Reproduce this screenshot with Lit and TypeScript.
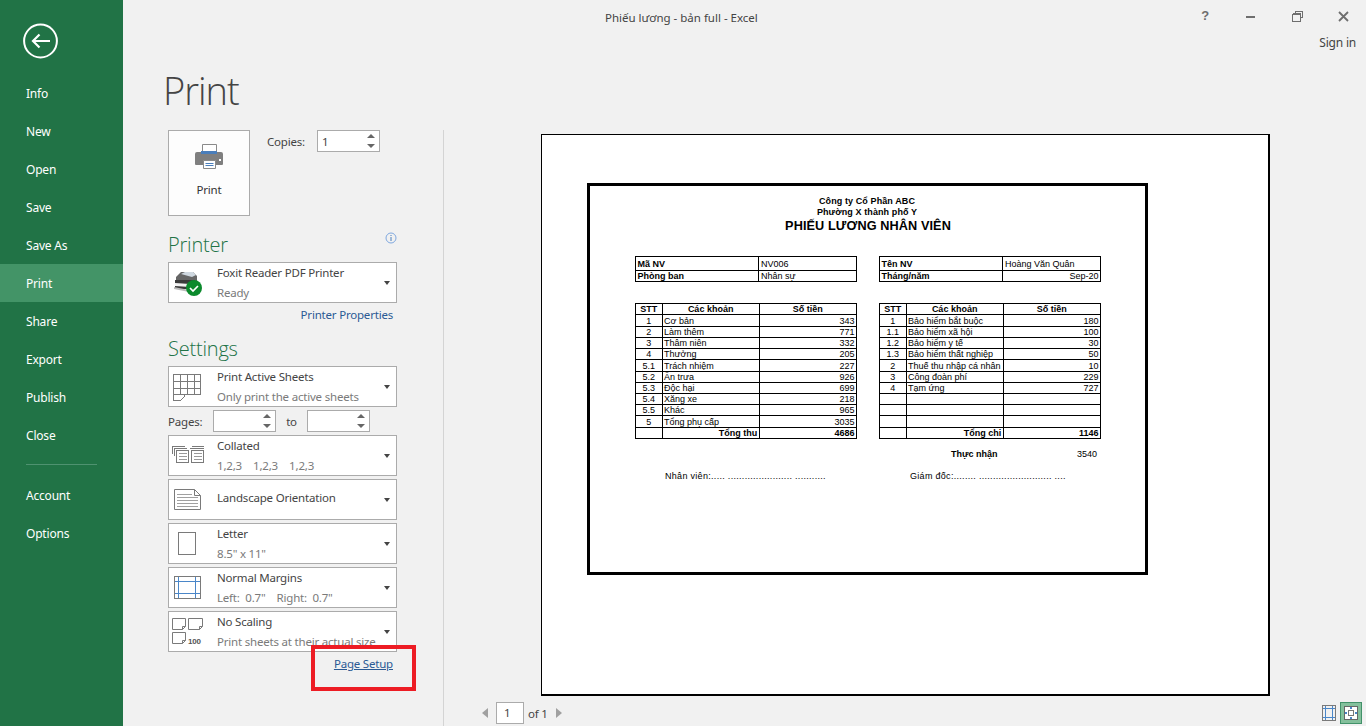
import { LitElement, html, css, svg } from "lit";
import { customElement } from "lit/decorators.js";

const G = "#7a7a7a";
const B = "#4a86c8";

const icons = {
  sheets: svg`<svg width="30" height="30" viewBox="0 0 30 30" fill="none" stroke="${G}" shape-rendering="crispEdges"><path d="M2.5 2.5h27v20h-27zM2.5 9.5h27M2.5 16.5h27M9.5 2.5v20M16.5 2.5v20M23.5 2.5v20"/><path d="M2.5 22.5v6h7l4-4v-2" fill="#fff"/></svg>`,
  collated: svg`<svg width="34" height="22" viewBox="0 0 34 22" fill="none" stroke="${G}" shape-rendering="crispEdges"><path d="M1.5 8.5v-7h12M3.5 10.5v-7h12M20.5 1.5h12M18.5 3.5h14" /><path d="M5.5 5.5h12v12h-12zM20.5 5.5h12v12h-12z" fill="#fff" stroke-width="1.4"/><path d="M7.5 8.5h8M7.5 11.5h8M7.5 14.5h8M22.5 8.5h8M22.5 11.5h8M22.5 14.5h8" stroke="#999"/></svg>`,
  landscape: svg`<svg width="30" height="24" viewBox="0 0 30 24" fill="none" stroke="${G}"><path d="M3.5 1.5h20l6 6v14h-26z"/><path d="M23.5 1.5v6h6" /><path d="M6 6.5h15M6 9.5h21M6 12.5h21M6 15.5h21M6 18.5h21" stroke="#a0a0a0"/></svg>`,
  letter: svg`<svg width="30" height="26" viewBox="0 0 30 26" fill="none" stroke="${G}" shape-rendering="crispEdges"><path d="M7.5 1.5h17v22h-17z"/></svg>`,
  margins: svg`<svg width="30" height="26" viewBox="0 0 30 26" fill="none" shape-rendering="crispEdges"><path d="M7.5 1v23M24.5 1v23M3 6.5h27M3 18.5h27" stroke="${B}"/><path d="M3.5 1.5h26v22h-26z" stroke="${G}"/></svg>`,
  scaling: svg`<svg width="34" height="30" viewBox="0 0 34 30" fill="none" stroke="${G}"><path d="M1.5 1.5h13v8l-3 3h-10zM11.5 12.5v-3h3"/><path d="M17.5 1.5h14v8l-3 3h-11zM28.5 12.5v-3h3"/><path d="M1.5 15.5h13v8l-3 3h-10zM11.5 26.5v-3h3"/><text x="17" y="27" stroke="none" fill="#555" font-size="8" font-weight="700" font-family="Liberation Sans, sans-serif">100</text></svg>`,
};

const leftRows = [
  ["1", "Cơ bản", "343"], ["2", "Làm thêm", "771"], ["3", "Thâm niên", "332"], ["4", "Thưởng", "205"],
  ["5.1", "Trách nhiệm", "227"], ["5.2", "Ăn trưa", "926"], ["5.3", "Độc hại", "699"], ["5.4", "Xăng xe", "218"],
  ["5.5", "Khác", "965"], ["5", "Tổng phụ cấp", "3035"],
];
const rightRows = [
  ["1", "Bảo hiểm bắt buộc", "180"], ["1.1", "Bảo hiểm xã hội", "100"], ["1.2", "Bảo hiểm y tế", "30"],
  ["1.3", "Bảo hiểm thất nghiệp", "50"], ["2", "Thuế thu nhập cá nhân", "10"], ["3", "Công đoàn phí", "229"],
  ["4", "Tạm ứng", "727"], ["", "", ""], ["", "", ""], ["", "", ""],
];

@customElement("app-root")
export class AppRoot extends LitElement {
  static styles = css`
    :host { display: block; position: relative; width: 1366px; height: 726px; overflow: hidden; background: #f1f1f1;
      font-family: "Noto Sans", sans-serif; font-size: 11.5px; letter-spacing: -0.2px; color: #444; }
    .app { display: flex; height: 726px; }
    nav { width: 123px; flex: none; background: #217346; color: #fff; padding-top: 23px; box-sizing: border-box; }
    .back { display: block; margin: 0 0 15px 23px; height: 36px; }
    .item { height: 38px; line-height: 40px; padding-left: 26px; font-size: 12px; }
    .item.on { background: #439467; }
    .sep { height: 1px; background: #4f9270; margin: 10px 26px 11px 26px; width: 71px; }
    main { flex: 1; min-width: 0; display: flex; flex-direction: column; }
    .top { height: 58px; display: flex; }
    .title { padding: 9px 0 0 482px; font-size: 11.5px; letter-spacing: 0; flex: 1; line-height: 17px; }
    .wincol { display: flex; flex-direction: column; align-items: flex-end; }
    .win { display: flex; }
    .win span { width: 46px; height: 32px; display: flex; align-items: center; justify-content: center; }
    .q { font: 700 13px "Liberation Sans", sans-serif; color: #6e6e6e; padding-bottom: 2px; box-sizing: border-box; }
    .sign { padding-right: 10px; font-size: 12px; line-height: 22px; }
    h1 { margin: 0 0 0 40px; height: 72px; font-family: "Open Sans", sans-serif; font-size: 38px; font-weight: 300; letter-spacing: -1px; line-height: 64px; color: #444; }
    .body { flex: 1; display: flex; min-height: 0; }
    .panel { margin-left: 45px; width: 229px; flex: none; }
    .prow { display: flex; height: 86px; }
    .pbtn { width: 82px; height: 86px; box-sizing: border-box; border: 1px solid #ababab; background: #fdfdfd; display: flex; flex-direction: column; align-items: center; padding-top: 13px; color: #333; }
    .pbtn svg { margin-bottom: 13px; }
    .copies { display: flex; margin-left: 17px; height: 22px; align-items: center; gap: 12px; }
    .spin { box-sizing: border-box; height: 22px; border: 1px solid #ababab; background: #fff; display: flex; align-items: center; justify-content: space-between; padding: 0 3px 0 4px; }
    .spin svg { display: block; }
    .w63 { width: 63px; }
    h2 { margin: 0; font-family: "Open Sans", sans-serif; font-size: 20px; font-weight: 300; letter-spacing: -0.2px; color: #217346; line-height: 28px; }
    .phead { display: flex; justify-content: space-between; height: 31px; margin-top: 15px; align-items: flex-start; }
    .info { margin: 1px 0 0 0; }
    .dd { box-sizing: border-box; height: 41px; border: 1px solid #ababab; background: #fff; display: flex; align-items: center; position: relative; }
    .dd + .dd { margin-top: 3px; }
    .ddicon { width: 48px; flex: none; display: flex; align-items: center; padding-left: 2px; box-sizing: border-box; }
    .ddtxt { flex: 1; line-height: 20px; white-space: nowrap; }
    .ddtxt.one { padding-bottom: 3px; }
    .ddtxt small { display: block; font-size: 11.5px; color: #7a7a7a; white-space: pre; }
    .caret { flex: none; width: 0; height: 0; border: 3.5px solid transparent; border-top: 4px solid #444; border-bottom: 0; margin: 0 6px 0 3px; }
    .link { color: #2b5a94; text-align: right; padding-right: 4px; line-height: 20px; margin-top: 2px; }
    .setting h2 { height: 32px; line-height: 30px; margin-top: 9px; }
    .pages { display: flex; align-items: center; height: 28px; }
    .pages .l1 { width: 45px; }
    .pages .l2 { width: 31px; text-align: center; }
    .psetup { text-decoration: underline; }
    .red { position: absolute; left: 311px; top: 645px; width: 105px; height: 46px; box-sizing: border-box; border: 4px solid #ed1c24; }
    .preview { flex: 1; min-width: 0; border-left: 1px solid #d4d4d4; margin-left: 46px; padding-left: 37px; padding-top: 4px; box-sizing: border-box; display: flex; flex-direction: column; }
    .page { width: 729px; height: 562px; margin-left: 60px; box-sizing: border-box; background: #fff; border: 1px solid #000; border-right-width: 2px; border-bottom-width: 2px; padding: 48px 0 0 45px; flex: none; }
    .sheet { box-sizing: border-box; width: 561px; height: 392px; border: 3px solid #000; font: 9px/11px "Liberation Sans", sans-serif; letter-spacing: 0; color: #000; padding: 8px 0 0 45px; }
    .hd { width: 464px; text-align: center; font-weight: 700; line-height: 11px; margin-top: 2px; letter-spacing: 0.1px; }
    .hd .big { font-size: 12.7px; line-height: 17px; padding-left: 2px; }
    .tabs { display: flex; gap: 22px; }
    table { border-collapse: collapse; table-layout: fixed; width: 222px; }
    td { border: 1px solid #000; padding: 0 1.5px; overflow: hidden; white-space: nowrap; height: 10px; line-height: 10px; }
    .r { text-align: right; } .c { text-align: center; } .b { font-weight: 700; }
    .t1 { margin-top: 21px; } .t1 tr:first-child td { height: 13px; }
    .t2 { margin-top: 21px; } tr.tall td { height: 11px; }
    .c1 { width: 12%; } .c2 { width: 44%; } .c3 { width: 55.85%; } .c4 { width: 44.15%; }
    .net { display: flex; margin-top: 10px; height: 11px; padding-left: 316px; font-weight: 700; }
    .net b { width: 126px; } .net span { font-weight: 400; }
    .signs { display: grid; grid-template-columns: 245px 245px; margin-top: 11px; padding-left: 30px; letter-spacing: 0.3px; white-space: nowrap; }
    .pager { display: flex; align-items: center; margin-top: 5px; height: 24px; padding-right: 4px; }
    .tri { flex: none; }
    .num { width: 28px; height: 22px; box-sizing: border-box; border: 1px solid #ababab; background: #fff; margin: 0 4px 0 7px; padding-left: 7px; line-height: 20px; }
    .of { margin-right: 7px; }
    .views { margin-left: auto; display: flex; align-items: center; gap: 4px; }
    .sel { width: 22px; height: 22px; box-sizing: border-box; border: 1px solid #42926a; background: #84c09c; display: flex; align-items: center; justify-content: center; }
  `;

  private dd(icon: unknown, a: string, b?: string) {
    return html`<div class="dd"><div class="ddicon">${icon}</div><div class="ddtxt ${b ? "" : "one"}">${a}${b ? html`<small>${b}</small>` : ""}</div><i class="caret"></i></div>`;
  }

  private spinArrows() {
    return html`<svg width="10" height="16" viewBox="0 0 10 16"><path d="M5 1l4 4H1zM5 15L1 11h8z" fill="#666"/></svg>`;
  }

  private table(rows: string[][], total: string, sum: string) {
    const tall = new Set([0, 4, 9]);
    return html`<table class="t2"><colgroup><col class="c1"/><col class="c2"/><col class="c2"/></colgroup>
      <tr><td class="c b">STT</td><td class="c b">Các khoản</td><td class="c b">Số tiền</td></tr>
      ${rows.map((r, i) => html`<tr class=${tall.has(i) ? "tall" : ""}><td class="c">${r[0]}</td><td>${r[1]}</td><td class="r">${r[2]}</td></tr>`)}
      <tr><td></td><td class="r b">${total}</td><td class="r b">${sum}</td></tr></table>`;
  }

  render() {
    const nav1 = ["Info", "New", "Open", "Save", "Save As", "Print", "Share", "Export", "Publish", "Close"];
    return html`<div class="app">
      <nav>
        <svg class="back" width="36" height="36" viewBox="0 0 36 36" fill="none" stroke="#fff"><circle cx="17.5" cy="18" r="16.4" stroke-width="2"/><path d="M10 18h17M16.5 11.5L10 18l6.5 6.5" stroke-width="2.2"/></svg>
        ${nav1.map((n) => html`<div class="item ${n === "Print" ? "on" : ""}">${n}</div>`)}
        <div class="sep"></div>
        <div class="item">Account</div>
        <div class="item">Options</div>
      </nav>
      <main>
        <div class="top">
          <div class="title">Phiếu lương - bản full - Excel</div>
          <div class="wincol">
            <div class="win">
              <span class="q">?</span>
              <span><svg width="10" height="10" viewBox="0 0 10 10"><path d="M0 6h9" stroke="#6e6e6e" stroke-width="2"/></svg></span>
              <span><svg width="11" height="11" viewBox="0 0 11 11" fill="none" stroke="#6e6e6e" shape-rendering="crispEdges"><path d="M3.5 2.5v-2h7v6h-2"/><path d="M0.5 3.5h8v7h-8z"/><path d="M0.5 2.5h8" /></svg></span>
              <span><svg width="11" height="11" viewBox="0 0 11 11"><path d="M1 1l9 9M10 1l-9 9" stroke="#6e6e6e" stroke-width="1.8"/></svg></span>
            </div>
            <div class="sign">Sign in</div>
          </div>
        </div>
        <h1>Print</h1>
        <div class="body">
          <div class="panel">
            <div class="prow">
              <div class="pbtn">
                <svg width="28" height="25" viewBox="0 0 28 25"><path d="M7.5.5h14v10h-14z" fill="#fff" stroke="#8a8a8a"/><path d="M0 10a2 2 0 0 1 2-2h5v1h14V8h5a2 2 0 0 1 2 2v10a1 1 0 0 1-1 1H1a1 1 0 0 1-1-1z" fill="#7f7f7f"/><path d="M6 7h16v3H6z" fill="#4a7ebb"/><path d="M8.5 16.5h12v8h-12z" fill="#fff" stroke="#8a8a8a"/><path d="M10.5 19.5h8M10.5 21.5h8" stroke="#4a7ebb"/><path d="M24 15h2v2h-2z" fill="#fff"/></svg>
                Print
              </div>
              <div class="copies">Copies:<div class="spin w63"><span>1</span>${this.spinArrows()}</div></div>
            </div>
            <div class="phead"><h2>Printer</h2>
              <svg class="info" width="12" height="12" viewBox="0 0 12 12" fill="none"><circle cx="6" cy="6" r="5" stroke="#7fa8e0"/><path d="M6 5v4M6 3v1" stroke="#4a7ebb"/></svg></div>
            <div class="dd"><div class="ddicon"><svg width="32" height="26" viewBox="0 0 32 26"><path d="M5 7l5-5h12l4 4v6H5z" fill="#666"/><path d="M10 4l4-2h8l3 3-4 2z" fill="#cfd8e0"/><path d="M4 10h20v9H4z" fill="#3a3a3a"/><path d="M4 13l15 1v3L4 16z" fill="#f2f2f2"/><path d="M3 17l15 3v2L3 19z" fill="#bbb"/><circle cx="23" cy="18" r="8" fill="#0b8a2c"/><path d="M19 18l3 3 5-5" stroke="#fff" stroke-width="1.7" fill="none"/></svg></div>
              <div class="ddtxt">Foxit Reader PDF Printer<small>Ready</small></div><i class="caret"></i></div>
            <div class="link">Printer Properties</div>
            <div class="setting"><h2>Settings</h2></div>
            ${this.dd(icons.sheets, "Print Active Sheets", "Only print the active sheets")}
            <div class="pages"><span class="l1">Pages:</span><div class="spin w63"><span></span>${this.spinArrows()}</div><span class="l2">to</span><div class="spin w63"><span></span>${this.spinArrows()}</div></div>
            ${this.dd(icons.collated, "Collated", "1,2,3    1,2,3    1,2,3")}
            ${this.dd(icons.landscape, "Landscape Orientation")}
            ${this.dd(icons.letter, "Letter", '8.5" x 11"')}
            ${this.dd(icons.margins, "Normal Margins", 'Left:  0.7"    Right:  0.7"')}
            ${this.dd(icons.scaling, "No Scaling", "Print sheets at their actual size")}
            <div class="link psetup">Page Setup</div>
          </div>
          <div class="preview">
            <div class="page">
              <div class="sheet">
                <div class="hd">Công ty Cổ Phần ABC<br/>Phường X thành phố Y<div class="big">PHIẾU LƯƠNG NHÂN VIÊN</div></div>
                <div class="tabs">
                  <table class="t1"><colgroup><col class="c3"/><col class="c4"/></colgroup>
                    <tr><td class="b">Mã NV</td><td>NV006</td></tr><tr><td class="b">Phòng ban</td><td>Nhân sự</td></tr></table>
                  <table class="t1"><colgroup><col class="c3"/><col class="c4"/></colgroup>
                    <tr><td class="b">Tên NV</td><td>Hoàng Văn Quân</td></tr><tr><td class="b">Tháng/năm</td><td class="r">Sep-20</td></tr></table>
                </div>
                <div class="tabs">
                  ${this.table(leftRows, "Tổng thu", "4686")}
                  ${this.table(rightRows, "Tổng chi", "1146")}
                </div>
                <div class="net"><b>Thực nhận</b><span>3540</span></div>
                <div class="signs"><span>Nhân viên:..... ....................... ...........</span><span>Giám đốc:........ .......................... ....</span></div>
              </div>
            </div>
            <div class="pager">
              <svg class="tri" width="8" height="10" viewBox="0 0 8 10"><path d="M7 0v10L1 5z" fill="#a0a0a0"/></svg>
              <div class="num">1</div><span class="of">of 1</span>
              <svg class="tri" width="8" height="10" viewBox="0 0 8 10"><path d="M1 0v10l6-5z" fill="#a0a0a0"/></svg>
              <div class="views">
                <svg width="14" height="16" viewBox="0 0 14 16" fill="none" shape-rendering="crispEdges"><path d="M3.5 1v14M10.5 1v14M1 3.5h12M1 12.5h12" stroke="${B}"/><path d="M.5.5h13v15H.5z" stroke="${G}"/></svg>
                <div class="sel"><svg width="18" height="18" viewBox="0 0 18 18" fill="none" shape-rendering="crispEdges"><path d="M2.5 2.5h13v13h-13z" stroke="#666" fill="#fff"/><path d="M6.5 6.5h5v5h-5z" stroke="#777"/><path d="M9 3v2M9 13v2M3 9h2M13 9h2" stroke="${B}" stroke-width="1.5"/></svg></div>
              </div>
            </div>
          </div>
        </div>
      </main>
    </div>
    <div class="red"></div>`;
  }
}
